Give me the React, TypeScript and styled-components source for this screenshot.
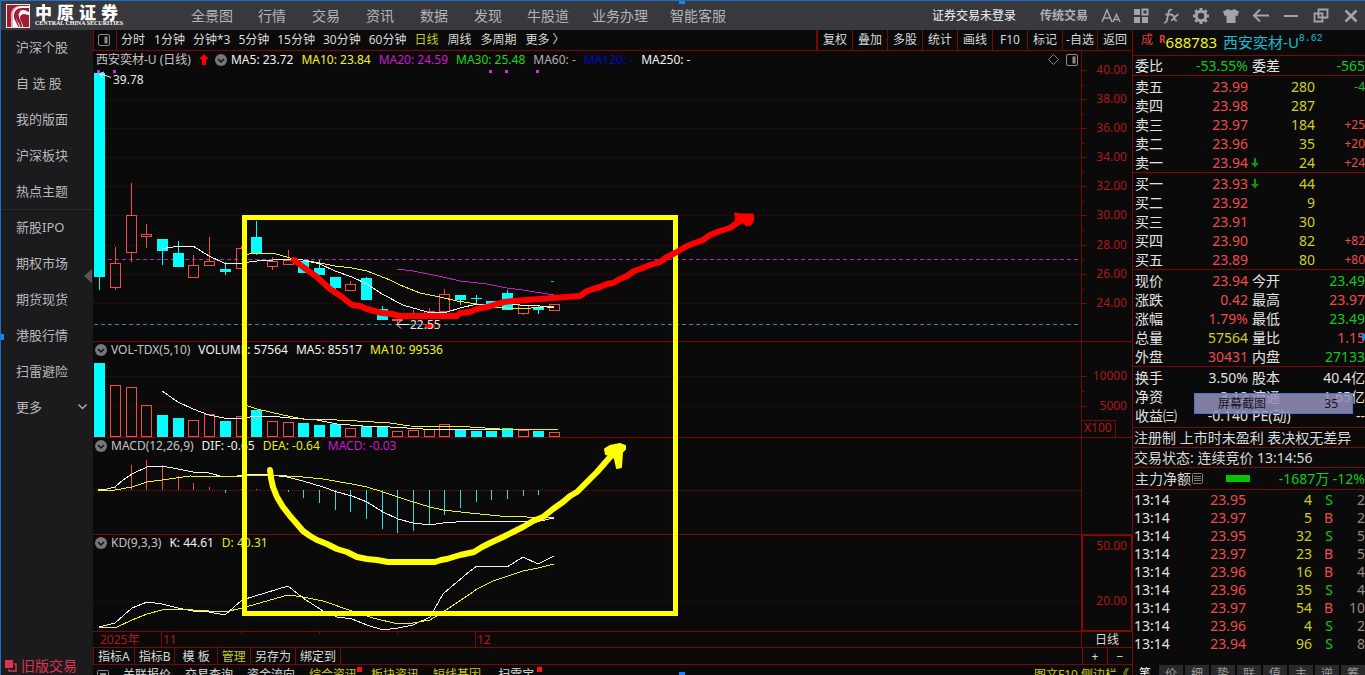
import React from "react";
import styled, { createGlobalStyle } from "styled-components";

const RED_LINE = "#7c0606";
const UP = "#f04a4a";
const DOWN = "#14c81e";
const QTY = "#cfcf22";
const CYAN = "#00ffff";

const GlobalStyle = createGlobalStyle`
  *, *::before, *::after { box-sizing: border-box; }
  html, body { margin: 0; background: #0a0a0a; }
  body { overflow: hidden; font-family: "Noto Sans", "Noto Sans CJK SC", sans-serif; font-size: 12px; color: #d8d8d8; }
  button { font: inherit; color: inherit; background: none; border: 0; padding: 0; margin: 0; white-space: nowrap; }
  a { color: inherit; text-decoration: none; }
  svg { display: block; flex: none; }
`;

const Frame = styled.div`
  position: relative;
  height: 100vh;
  overflow: hidden;
  display: flex;
  flex-direction: column;
  border-top: 1px solid #1f6fc4;
  border-left: 1px solid #1f6fc4;
`;

const Handle = styled.i<{ $side: "top" | "bottom" | "left" | "right" }>`
  position: absolute;
  z-index: 5;
  width: 6px;
  height: 6px;
  background: #1c84ee;
  ${(p) => (p.$side === "top" || p.$side === "bottom" ? "left: calc(50% - 4px);" : "top: 333px;")}
  ${(p) => `${p.$side}: -3px;`}
`;

/* ---------- title bar ---------- */

const TitleBar = styled.header`
  flex: none;
  height: 29px;
  display: flex;
  align-items: center;
  background: #38383d;
`;

const Brand = styled.a`
  width: 178px;
  display: flex;
  gap: 5px;
  padding-left: 5px;
  color: #fff;
`;

const BrandText = styled.span`
  display: flex;
  flex-direction: column;
`;

const BrandName = styled.span`
  display: flex;
  gap: 5px;
  font: 900 17px/16px "Noto Sans CJK SC", sans-serif;
`;

const BrandLatin = styled.span`
  font: bold 6px/6px "Liberation Serif", serif;
  white-space: nowrap;
`;

const Menu = styled.nav`
  flex: 1;
  display: flex;
`;

const MenuItem = styled.button<{ $pad: number }>`
  padding: 0 ${(p) => p.$pad}px;
  font-size: 14px;
  line-height: 28px;
  color: #b4b4b6;
`;

const Session = styled.div`
  display: flex;
  gap: 24px;
  margin-right: 13px;
  line-height: 28px;
`;

const SessionButton = styled.button<{ $dim?: boolean }>`
  color: ${(p) => (p.$dim ? "#b0b0b2" : "#f4f4f4")};
  font-weight: ${(p) => (p.$dim ? 700 : 400)};
`;

const WindowTools = styled.div`
  display: flex;
  gap: 10px;
  padding-right: 4px;
  color: #a4a4a8;
`;

const ToolButton = styled.button`
  width: 20px;
  height: 20px;
`;

/* ---------- page body ---------- */

const Body = styled.div`
  flex: 1;
  min-height: 0;
  display: flex;
`;

const Sidebar = styled.nav`
  position: relative;
  flex: none;
  width: 92px;
  display: flex;
  flex-direction: column;
  background: #1b1b1d;
`;

const SideItem = styled.button<{ $rule?: boolean }>`
  flex: none;
  display: flex;
  align-items: center;
  justify-content: space-between;
  height: 36px;
  padding: 0 6px 2px 15px;
  font-size: 13px;
  color: #b8b8ba;
  border-bottom: 1px solid ${(p) => (p.$rule ? "#2c2c2f" : "transparent")};
`;

const OldVersion = styled.button`
  display: flex;
  align-items: center;
  gap: 4px;
  margin-top: auto;
  padding-left: 4px;
  font-size: 14px;
  line-height: 19px;
  color: #dc3550;
`;

const Collapse = styled.button`
  position: absolute;
  right: 1px;
  top: 239px;
  width: 8px;
  height: 14px;
`;

const Main = styled.main`
  flex: 1;
  min-width: 0;
  display: flex;
  flex-direction: column;
`;

const Toolbar = styled.div`
  flex: none;
  display: flex;
  height: 21px;
  border-bottom: 1px solid ${RED_LINE};
  border-left: 1px solid ${RED_LINE};
`;

const LayoutCell = styled.button`
  width: 23px;
  padding-left: 4px;
  border-right: 1px solid ${RED_LINE};
`;

const Periods = styled.div`
  flex: 1;
  display: flex;
  gap: 8px;
  padding-left: 4px;
`;

const Period = styled.button<{ $active?: boolean; $word?: boolean }>`
  margin-right: ${(p) => (p.$word ? 1 : 0)}px;
  line-height: 20px;
  color: ${(p) => (p.$active ? "#c8c81c" : "#dadada")};
`;

const Actions = styled.div`
  display: flex;
  border-left: 1px solid ${RED_LINE};
`;

const Action = styled.button`
  width: 35px;
  line-height: 20px;
  border-left: 1px solid ${RED_LINE};
`;

/* ---------- charts ---------- */

const Charts = styled.div`
  position: relative;
  flex: none;
`;

const Panel = styled.section`
  display: flex;
  border-bottom: 1px solid ${RED_LINE};
`;

const PlotColumn = styled.div`
  flex: 1;
  min-width: 0;
  padding-left: 1px;
`;

const Value = styled.span<{ $color?: string }>`
  color: ${(p) => p.$color ?? "#f2f2f2"};
`;

const LegendName = styled.span`
  margin-right: 2px;
  color: #c4c4c4;
`;

const Legend = styled.div<{ $tall?: boolean }>`
  display: flex;
  align-items: center;
  gap: 6px;
  height: ${(p) => (p.$tall ? 17 : 16)}px;
  padding-left: ${(p) => (p.$tall ? 2 : 1)}px;
  line-height: 16px;
  white-space: pre;

  svg + ${LegendName}, svg + ${Value} { margin-left: -2px; }
  ${Value} + ${Value} { margin-left: 2px; }
`;

const LegendTools = styled.span`
  display: flex;
  align-items: center;
  gap: 7px;
  margin: 0 3px 0 auto;
`;

const Axis = styled.div<{ $framed?: boolean }>`
  flex: none;
  width: 51px;
  border-left: 1px solid ${RED_LINE};
  box-shadow: ${(p) => (p.$framed ? "inset 0 0 0 1px #8e0808" : "none")};
`;

const Annotations = styled.svg`
  position: absolute;
  left: 0;
  top: 0;
  pointer-events: none;
`;

const TabsRow = styled.div`
  flex: none;
  display: flex;
  height: 17px;
  border-bottom: 1px solid ${RED_LINE};
  border-left: 1px solid ${RED_LINE};
`;

const TemplateTab = styled.button<{ $active?: boolean }>`
  padding: 1px 4px 0;
  line-height: 15px;
  border-right: 1px solid ${RED_LINE};
  color: ${(p) => (p.$active ? "#c8c81c" : "#dadada")};
`;

const ZoomKeys = styled.div`
  display: flex;
  margin-left: auto;
`;

const ZoomKey = styled.button`
  width: 25px;
  line-height: 15px;
  border-left: 1px solid ${RED_LINE};
`;

const AxisCaption = styled.div`
  flex: none;
  width: 51px;
  border-left: 1px solid ${RED_LINE};
  text-align: center;
  line-height: 15px;
`;

const LinksRow = styled.div`
  flex: none;
  display: flex;
  gap: 14px;
  padding: 1px 3px 0 4px;
  line-height: 17px;
`;

const LinkItem = styled.a<{ $hot?: boolean; $end?: boolean }>`
  position: relative;
  white-space: pre;
  margin-left: ${(p) => (p.$end ? "auto" : 0)};
  color: ${(p) => (p.$hot ? "#c8c81c" : "#dadada")};
`;

const NewDot = styled.i`
  position: absolute;
  right: -5px;
  top: 1px;
  width: 5px;
  height: 5px;
  background: #ff1010;
`;

/* ---------- quote panel ---------- */

const Quote = styled.aside`
  position: relative;
  flex: none;
  width: 233px;
  display: flex;
  flex-direction: column;
  border-left: 1px solid ${RED_LINE};
`;

const QuoteHead = styled.h1`
  flex: none;
  display: flex;
  height: 26px;
  margin: 0;
  padding: 0 0 0 8px;
  font-size: 15px;
  font-weight: 400;
  line-height: 25px;
  border-bottom: 1px solid ${RED_LINE};
`;

const Flag = styled.span`
  width: 18px;
  font-size: 12px;
  line-height: 19px;
  color: #e03a3a;
`;

const Mark = styled.sup`
  font-size: 10px;
  font-weight: 700;
  line-height: 18px;
  color: #e03a3a;
`;

const Code = styled.span`
  margin-right: 6px;
  color: #f4f41c;
`;

const StockName = styled.span`
  color: #14bcd0;
`;

const Change = styled.sup`
  font: 10px/18px "Liberation Mono", monospace;
  color: #14bcd0;
`;

const Table = styled.table`
  width: 100%;
  table-layout: fixed;
  border-collapse: collapse;
`;

const TableBox = styled.div<{ $top?: number; $bottom?: number; $open?: boolean }>`
  flex: none;
  padding: ${(p) => p.$top ?? 1}px 0 ${(p) => p.$bottom ?? 0}px;
  border-bottom: 1px solid ${(p) => (p.$open ? "transparent" : RED_LINE)};
`;

const Cell = styled.td<{ $color?: string; $small?: boolean; $short?: boolean }>`
  height: ${(p) => (p.$short ? 18 : 19)}px;
  padding: 0;
  font-size: ${(p) => (p.$small ? 12 : 14)}px;
  line-height: 18px;
  white-space: nowrap;
  text-align: right;
  color: ${(p) => p.$color ?? "#e0e0e0"};
`;

const Label = styled.th<{ $second?: boolean; $short?: boolean }>`
  height: ${(p) => (p.$short ? 18 : 19)}px;
  padding: 0 0 0 ${(p) => (p.$second ? 4 : p.$short ? 1 : 2)}px;
  font-size: 14px;
  font-weight: 400;
  line-height: 18px;
  text-align: left;
  white-space: nowrap;
  color: #e4e4e4;
`;

const QtyBox = styled.div`
  display: flex;
  align-items: center;
  padding-left: 3px;
`;

const QtyNumber = styled.span`
  margin-left: auto;
`;

const Note = styled.p`
  flex: none;
  margin: 0;
  padding-left: 1px;
  font-size: 14px;
  line-height: 19px;
  white-space: nowrap;
  border-bottom: 1px solid ${RED_LINE};
`;

const Flow = styled.div`
  flex: none;
  display: flex;
  align-items: center;
  height: 22px;
  padding-left: 2px;
  font-size: 14px;
  line-height: 20px;
  white-space: pre;
  border-bottom: 1px solid ${RED_LINE};
`;

const FlowBar = styled.i`
  width: 24px;
  height: 7px;
  margin-left: 22px;
  background: #04c404;
`;

const FlowValue = styled.span`
  margin-left: auto;
  color: ${DOWN};
`;

const QuoteTabs = styled.div`
  flex: none;
  display: flex;
  gap: 2px;
  margin-top: 11px;
`;

const QuoteTab = styled.button<{ $active?: boolean }>`
  width: 24px;
  flex: none;
  line-height: 18px;
  background: ${(p) => (p.$active ? "#0a0a0a" : "#2a2a2d")};
  color: ${(p) => (p.$active ? "#fff" : "#9a9a9a")};
`;

const CaptureTag = styled.div`
  position: absolute;
  left: 61px;
  top: 363px;
  width: 159px;
  display: flex;
  justify-content: space-between;
  padding: 0 14px 0 23px;
  font-size: 12px;
  line-height: 19px;
  color: #15151c;
  background: rgba(150, 145, 190, 0.85);
  border: 1px solid #4a78c0;
`;

/* ---------- data ---------- */

type Candle = [x: number, top: number, bottom: number, high: number, low: number, up: 0 | 1, volTop: number];

const CANDLES: Candle[] = [
  [99, 73, 277, 73, 290, 0, 363],
  [115, 263, 288, 247, 290, 1, 385],
  [131, 215, 253, 183, 262, 1, 387],
  [146, 234, 237, 224, 248, 1, 405],
  [162, 239, 251, 239, 265, 0, 415],
  [178, 253, 267, 241, 267, 0, 418],
  [193, 265, 278, 255, 278, 1, 420],
  [209, 261, 266, 237, 266, 1, 414],
  [225, 269, 272, 262, 275, 0, 421],
  [241, 248, 269, 246, 269, 1, 416],
  [256, 237, 254, 221, 255, 0, 410],
  [272, 261, 267, 257, 270, 1, 421],
  [288, 260, 265, 250, 265, 1, 422],
  [303, 261, 273, 261, 273, 0, 423],
  [319, 268, 275, 260, 275, 0, 425],
  [335, 277, 288, 277, 289, 0, 424],
  [350, 284, 291, 281, 291, 1, 428],
  [366, 278, 300, 277, 300, 0, 426],
  [382, 309, 320, 306, 320, 0, 427],
  [397, 319, 321, 317, 323, 1, 431],
  [413, 315, 318, 310, 318, 1, 430],
  [429, 311, 315, 308, 315, 1, 429],
  [444, 294, 312, 289, 312, 1, 424],
  [460, 295, 300, 295, 305, 0, 430],
  [476, 298, 299, 295, 303, 0, 431],
  [491, 301, 304, 301, 304, 0, 431],
  [507, 293, 310, 290, 310, 0, 428],
  [523, 305, 314, 305, 315, 1, 430],
  [538, 307, 310, 306, 314, 0, 431],
  [554, 304, 311, 304, 311, 1, 432],
];

const MACD_ENDS = [
  490, 487, 465, 460, 465, 476, 483, 487, 493, 489, 489, 490, 492, 498, 503, 510, 512, 519, 529, 533, 531, 525, 515,
  508, 502, 500, 499, 496, 495, 490,
];

const MA5 =
  "162,249 178,246 193,246 209,256 224,263 242,263 257,261 273,260 290,259 303,260 320,264 335,271 352,277 367,284 382,294 403,305 427,312 435,313 447,312 460,308 477,304 490,304 503,303 520,305 540,306 554,308";
const MA10 =
  "242,255 257,253 273,253 290,258 303,260 320,263 335,266 352,268 367,271 390,280 400,285 420,293 440,297 457,301 477,304 493,307 520,309 554,306";
const MA20 = "397,269 413,271 443,277 460,281 487,284 507,288 523,290 554,295";
const VMA5 =
  "162,391 178,402 193,409 209,415 224,418 242,419 250,417 270,416 290,418 317,420 337,424 363,426 390,427 423,429 470,429 558,430";
const VMA10 = "242,404 257,409 283,415 303,419 337,420 357,421 390,423 410,426 470,427 500,429 558,430";
const DIF =
  "98,490 107,489 115,487 123,480 132,474 147,467 162,466 178,469 193,472 209,473 224,477 237,476 250,474 270,475 287,477 303,481 323,487 337,492 352,496 367,502 383,512 398,519 413,523 430,525 443,523 470,521 500,521 540,521 554,518";
const DEA =
  "98,490 115,490 132,487 147,482 162,480 190,476 237,477 250,475 270,475 303,477 323,479 352,484 367,487 383,492 410,501 430,507 443,510 470,513 500,516 527,517 554,518";
const K_LINE =
  "99,627 115,623 132,608 147,602 162,604 178,608 193,611 209,612 225,615 242,600 288,586 303,598 323,611 337,617 352,619 367,625 383,630 398,628 413,625 430,617 443,594 457,582 470,571 477,566 507,567 523,557 538,564 554,556";
const D_LINE =
  "99,627 117,627 132,620 147,614 162,610 178,609 193,610 225,612 242,608 288,595 303,597 323,601 352,611 373,618 398,624 413,623 430,620 443,612 470,594 477,589 493,581 523,571 538,568 554,564";

const MENU = ["全景图", "行情", "交易", "资讯", "数据", "发现", "牛股道", "业务办理", "智能客服"];
const SIDE = [
  "沪深个股", "自 选 股", "我的版面", "沪深板块", "热点主题", "新股IPO", "期权市场", "期货现货", "港股行情", "扫雷避险",
];
const PERIODS = ["分时", "1分钟", "分钟*3", "5分钟", "15分钟", "30分钟", "60分钟", "日线", "周线", "多周期", "更多 〉"];
const WORD_PERIODS = ["分时", "日线", "周线", "多周期"];
const ACTIONS = ["复权", "叠加", "多股", "统计", "画线", "F10", "标记", "-自选", "返回"];
const TEMPLATES = ["指标A", "指标B", " 模 板 ", "管理", "另存为", "绑定到"];
const QUOTE_TABS = ["笔", "价", "细", "势", "联", "值", "主", "逆", "筹"];

type Level = { name: string; price: string; qty: string; diff: string; arrow?: boolean };
const ASKS: Level[] = [
  { name: "卖五", price: "23.99", qty: "280", diff: "-4" },
  { name: "卖四", price: "23.98", qty: "287", diff: "" },
  { name: "卖三", price: "23.97", qty: "184", diff: "+25" },
  { name: "卖二", price: "23.96", qty: "35", diff: "+20" },
  { name: "卖一", price: "23.94", qty: "24", diff: "+24", arrow: true },
];
const BIDS: Level[] = [
  { name: "买一", price: "23.93", qty: "44", diff: "", arrow: true },
  { name: "买二", price: "23.92", qty: "9", diff: "" },
  { name: "买三", price: "23.91", qty: "30", diff: "" },
  { name: "买四", price: "23.90", qty: "82", diff: "+82" },
  { name: "买五", price: "23.89", qty: "80", diff: "+80" },
];

type Pair = [string, string, string | undefined, string, string, string | undefined];
const RATIO: Pair[] = [["委比", "-53.55%", DOWN, "委差", "-565", DOWN]];
const STATS: Pair[] = [
  ["现价", "23.94", UP, "今开", "23.49", DOWN],
  ["涨跌", "0.42", UP, "最高", "23.97", UP],
  ["涨幅", "1.79%", UP, "最低", "23.49", DOWN],
  ["总量", "57564", QTY, "量比", "1.15", UP],
  ["外盘", "30431", UP, "内盘", "27133", DOWN],
];
const FUNDAMENTALS: Pair[] = [
  ["换手", "3.50%", undefined, "股本", "40.4亿", undefined],
  ["净资", "3.12", undefined, "流通", "1.65亿", undefined],
  ["收益㈢", "-0.140", undefined, "PE(动)", "--", undefined],
];
const TRADES: [string, string, "S" | "B", string][] = [
  ["23.95", "4", "S", "2"],
  ["23.97", "5", "B", "2"],
  ["23.95", "32", "S", "5"],
  ["23.97", "23", "B", "5"],
  ["23.96", "16", "B", "4"],
  ["23.96", "35", "S", "4"],
  ["23.97", "54", "B", "10"],
  ["23.96", "4", "S", "2"],
  ["23.94", "96", "S", "8"],
];

/* ---------- drawing parts ---------- */

const Line = ({ points, color = "#f4f4f4" }: { points: string; color?: string }) => (
  <polyline points={points} fill="none" stroke={color} strokeWidth={1} shapeRendering="crispEdges" />
);

/* Chart coordinates count from the window corner; each plot shifts them to its own top. */
const Plot = ({ top, height, grid = [], children }: {
  top: number; height: number; grid?: number[]; children: React.ReactNode;
}) => (
  <svg width="100%" height={height}>
    {grid.map((y) => (
      <line key={y} x1="0" x2="100%" y1={y - top + 0.5} y2={y - top + 0.5} stroke="#6e0c0c" strokeDasharray="1 3" />
    ))}
    <g transform={`translate(-94 ${-top})`}>{children}</g>
  </svg>
);

const Bar = ({ x, top, bottom, up }: { x: number; top: number; bottom: number; up: 0 | 1 }) =>
  up ? (
    <rect x={x - 4.5} y={top + 0.5} width={10} height={Math.max(bottom - top - 1, 1)} fill="none" stroke={UP} />
  ) : (
    <rect x={x - 5} y={top} width={11} height={bottom - top} fill={CYAN} />
  );

const AxisScale = ({ top, height, marks, minor = [], box }: {
  top: number; height: number; marks: [number, string][]; minor?: number[]; box?: boolean;
}) => (
  <svg width="50" height={height} fontSize="12" fill="#b01818">
    {marks.map(([y, text]) => (
      <g key={text}>
        <path d={`M0 ${y - top + 0.5}h5`} stroke={RED_LINE} />
        <text x="45" y={y - top + 4} textAnchor="end">{text}</text>
      </g>
    ))}
    {minor.map((y) => (
      <path key={y} d={`M0 ${y - top + 0.5}h2`} stroke={RED_LINE} />
    ))}
    {box ? (
      <g>
        <path d={`M0 ${420.5 - top}h33.5v17`} stroke={RED_LINE} fill="none" />
        <text x="2" y={432 - top}>X100</text>
      </g>
    ) : null}
  </svg>
);

const RoundChevron = () => (
  <svg width="12" height="12" viewBox="0 0 12 12">
    <circle cx="6" cy="6" r="6" fill="#77777a" />
    <path d="M3 5l3 3 3-3" fill="none" stroke="#101010" strokeWidth="1.5" />
  </svg>
);

const PaneIcon = () => (
  <svg width="12" height="12" viewBox="0 0 12 12">
    <rect x=".5" y=".5" width="11" height="11" rx="1.5" fill="none" stroke="#8c8c8c" />
    <rect x="6.5" y="2.5" width="3" height="7" fill="#8c8c8c" />
  </svg>
);

const LogoMark = () => (
  <svg width="24" height="24" viewBox="0 0 24 24">
    <rect width="24" height="24" fill="#f2e9ea" />
    <rect x="1" y="1" width="22" height="22" fill="#a01c30" />
    <path d="M5 23V11C5 5 9 2 15 2h8v2h-7C11 4 8 7 8 12c0 5 3 6 4 11z" fill="#fff" />
    <path d="M13 23c0-4-3-6-3-10 0-4 3-7 7-7 3 0 5 2 6 2v3c-2 0-4-1-5-1-2 0-4 1-4 4 0 3 3 5 3 9z" fill="#fff" />
    <path d="M10 14c-1-5 2-7 6-8-3 2-4 4-3 7 1 4 3 5 3 10h-2c0-4-3-5-4-9z" fill="#a01c30" />
    <path d="M1 14c2-7 5-11 12-12-4 2-6 5-6 9v12H4z" fill="#a01c30" opacity=".35" />
  </svg>
);

const icon = { width: 20, height: 20, viewBox: "0 0 20 20", fill: "none", stroke: "currentColor", strokeWidth: 2 };

const TOOL_ICONS: [string, React.ReactNode][] = [
  ["字体", (
    <svg {...icon} strokeWidth={1.5}>
      <path d="M1 16L6 4l5 12M3 12h6M12 16l3.5-7.500L19 16M13 13.500h5" />
    </svg>
  )],
  ["布局", (
    <svg {...icon} stroke="none" fill="currentColor">
      <path d="M3 3h6v6H3zM3 11h6v6H3zM11 11h6v6h-6z" />
      <path d="M11.500 3.500h5v5h-5z" fill="none" stroke="currentColor" />
    </svg>
  )],
  ["公式", (
    <svg {...icon} strokeWidth={1.8}>
      <path d="M11 4c-2-1-3 0-3.500 2.500L6 14c-.5 2.500-1.500 3-3 2.500M4.500 8.500h6M10 8.500c2 0 2.500 1 3 3s1 3.500 3 3M17.500 8.500c-2.500 0-5.500 6-7.500 6" />
    </svg>
  )],
  ["设置", (
    <svg {...icon}>
      <circle cx="10" cy="10" r="4.700" strokeWidth="3" />
      <path d="M10 2v3M10 15v3M2 10h3M15 10h3M4.300 4.300l2.200 2.200M13.500 13.500l2.200 2.200M4.300 15.700l2.200-2.200M13.500 6.500l2.200-2.200" strokeWidth="3" />
    </svg>
  )],
  ["皮肤", (
    <svg {...icon} stroke="none" fill="currentColor">
      <path d="M7 3c1 1.500 5 1.500 6 0l5 2.500-1.500 4.500-2-.5V17h-9V9.500l-2 .5L2 5.500z" />
    </svg>
  )],
  ["后退", <svg {...icon}><path d="M18 9.500H3.500M9 3.500l-6 6 6 6" /></svg>],
  ["最小化", <svg {...icon}><path d="M3 10h14" /></svg>],
  ["还原", (
    <svg {...icon} strokeWidth={1.8}>
      <path d="M3.500 7.500h8v8h-8zM7.500 3.500h9v8h-9zM7.500 7.500v4h4" />
    </svg>
  )],
  ["关闭", <svg {...icon} strokeWidth={2.5}><path d="M4.500 4.500l11 11M15.500 4.500l-11 11" /></svg>],
];

/* ---------- table parts ---------- */

const LevelTable = ({ rows }: { rows: Level[] }) => (
  <TableBox>
    <Table>
      <colgroup><col width="60" /><col width="55" /><col width="67" /><col width="50" /></colgroup>
      <tbody>
        {rows.map((r) => (
          <tr key={r.name}>
            <Label scope="row">{r.name}</Label>
            <Cell $color={UP}>{r.price}</Cell>
            <Cell $color={QTY}>
              <QtyBox>
                {r.arrow ? (
                  <svg width="8" height="10" viewBox="0 0 8 10">
                    <path d="M3 0h2v5h3L4 9.500 0 5h3z" fill="#0c940c" />
                  </svg>
                ) : null}
                <QtyNumber>{r.qty}</QtyNumber>
              </QtyBox>
            </Cell>
            <Cell $small $color={r.diff.startsWith("-") ? DOWN : UP}>{r.diff}</Cell>
          </tr>
        ))}
      </tbody>
    </Table>
  </TableBox>
);

const PairTable = ({ rows, top, bottom }: { rows: Pair[]; top?: number; bottom?: number }) => (
  <TableBox $top={top} $bottom={bottom}>
    <Table>
      <colgroup><col width="50" /><col width="65" /><col width="50" /><col width="67" /></colgroup>
      <tbody>
        {rows.map(([a, v, c, b, w, d]) => (
          <tr key={a}>
            <Label scope="row">{a}</Label>
            <Cell $color={c}>{v}</Cell>
            <Label scope="row" $second>{b}</Label>
            <Cell $color={d}>{w}</Cell>
          </tr>
        ))}
      </tbody>
    </Table>
  </TableBox>
);

/* ---------- page ---------- */

export default function App() {
  return (
    <Frame>
      <GlobalStyle />
      <Handle $side="top" />
      <Handle $side="bottom" />
      <Handle $side="left" />
      <Handle $side="right" />

      <TitleBar>
        <Brand href="#">
          <LogoMark />
          <BrandText>
            <BrandName>{[..."中原证券"].map((ch) => <span key={ch}>{ch}</span>)}</BrandName>
            <BrandLatin>CENTRAL CHINA SECURITIES</BrandLatin>
          </BrandText>
        </Brand>
        <Menu>
          {MENU.map((m) => <MenuItem key={m} $pad={15 - m.length}>{m}</MenuItem>)}
        </Menu>
        <Session>
          <SessionButton>证券交易未登录</SessionButton>
          <SessionButton $dim>传统交易</SessionButton>
        </Session>
        <WindowTools>
          {TOOL_ICONS.map(([name, drawing]) => <ToolButton key={name} aria-label={name}>{drawing}</ToolButton>)}
        </WindowTools>
      </TitleBar>

      <Body>
        <Sidebar>
          {SIDE.map((s) => <SideItem key={s} $rule={s === "热点主题"}>{s}</SideItem>)}
          <SideItem>
            更多
            <svg width="9" height="6" viewBox="0 0 9 6"><path d="M.5 .5l4 4 4-4" fill="none" stroke="#b0b0b0" strokeWidth="1.3" /></svg>
          </SideItem>
          <OldVersion>
            <svg width="12" height="12" viewBox="0 0 12 12">
              <rect x="0" y="0" width="8" height="8" fill="#dc3550" />
              <path d="M9 4h2v7H4V9" fill="none" stroke="#dc3550" strokeWidth="1.5" />
            </svg>
            旧版交易
          </OldVersion>
          <Collapse aria-label="收起">
            <svg width="8" height="14" viewBox="0 0 8 14"><path d="M8 0v14L0 7z" fill="#56565a" /></svg>
          </Collapse>
        </Sidebar>

        <Main>
          <Toolbar>
            <LayoutCell aria-label="版面"><PaneIcon /></LayoutCell>
            <Periods>
              {PERIODS.map((p) => (
                <Period key={p} $active={p === "日线"} $word={WORD_PERIODS.includes(p)}>{p}</Period>
              ))}
            </Periods>
            <Actions>{ACTIONS.map((a) => <Action key={a}>{a}</Action>)}</Actions>
          </Toolbar>

          <Charts>
            <Panel>
              <PlotColumn>
                <Legend $tall>
                  <LegendName>西安奕材-U (日线)</LegendName>
                  <svg width="10" height="11" viewBox="0 0 10 11"><path d="M5 0l5 5H7v6H3V5H0z" fill="#f00" /></svg>
                  <RoundChevron />
                  <Value>MA5: 23.72</Value>
                  <Value $color="#f4f41c">MA10: 23.84</Value>
                  <Value $color="#d018d0">MA20: 24.59</Value>
                  <Value $color="#14dc14">MA30: 25.48</Value>
                  <Value $color="#b0b0b0">MA60: -</Value>
                  <Value $color="#0808c4">MA120: -</Value>
                  <Value>MA250: -</Value>
                  <LegendTools>
                    <svg width="11" height="11" viewBox="0 0 11 11">
                      <path d="M5.500 .5l5 5-5 5-5-5z" fill="none" stroke="#808080" />
                    </svg>
                    <PaneIcon />
                  </LegendTools>
                </Legend>
                <Plot top={68} height={273} grid={[99, 128, 157, 186, 215, 245, 274, 303]}>
                  <path d="M94 259.500H4000" stroke="#b424b4" strokeDasharray="4 3" />
                  <path d="M94 324.500H4000" stroke="#3c84b4" strokeDasharray="4 3" />
                  {CANDLES.map(([x, top, bottom, high, low, up]) => (
                    <g key={x}>
                      <path
                        d={up ? `M${x + 0.5} ${high}V${top}M${x + 0.5} ${bottom}V${low}` : `M${x + 0.5} ${high}V${low}`}
                        stroke={up ? UP : CYAN}
                      />
                      <Bar x={x} top={top} bottom={bottom} up={up} />
                    </g>
                  ))}
                  <Line points={MA20} color="#c81cc8" />
                  <Line points={MA10} color="#f0f01c" />
                  <Line points={MA5} />
                  <path d="M551 281.500h3" stroke="#14dc14" />
                  {[98, 114, 490, 506, 537].map((x) => (
                    <rect key={x} x={x - 1} y="70" width="3" height="3" fill="#d828d8" />
                  ))}
                  <path d="M111 77.500l-11-4M104 72l-4 1.500 2 4" fill="none" stroke="#f0f0f0" />
                  <path d="M409 324.500h-12M401 320.500l-4 4 4 4" fill="none" stroke="#f0f0f0" />
                  <text x="113" y="84" fontSize="12" fill="#e4e4e4">39.78</text>
                  <ellipse cx="430" cy="326" rx="5" ry="3" fill="#f00" />
                  <text x="410" y="329" fontSize="12" fill="#e4e4e4">22.55</text>
                </Plot>
              </PlotColumn>
              <Axis>
                <AxisScale
                  top={51}
                  height={290}
                  marks={[
                    [70, "40.00"], [99, "38.00"], [128, "36.00"], [157, "34.00"], [186, "32.00"],
                    [215, "30.00"], [245, "28.00"], [274, "26.00"], [303, "24.00"],
                  ]}
                  minor={[85, 114, 143, 172, 201, 230, 260, 289]}
                />
              </Axis>
            </Panel>

            <Panel>
              <PlotColumn>
                <Legend>
                  <RoundChevron />
                  <LegendName>VOL-TDX(5,10)</LegendName>
                  <Value>VOLUME: 57564</Value>
                  <Value>MA5: 85517</Value>
                  <Value $color="#f4f41c">MA10: 99536</Value>
                </Legend>
                <Plot top={358} height={79} grid={[376, 406]}>
                  {CANDLES.map(([x, , , , , up, vol]) => <Bar key={x} x={x} top={vol} bottom={437} up={up} />)}
                  <Line points={VMA5} />
                  <Line points={VMA10} color="#f0f01c" />
                </Plot>
              </PlotColumn>
              <Axis>
                <AxisScale top={342} height={95} marks={[[376, "10000"], [406, "5000"]]} minor={[391]} box />
              </Axis>
            </Panel>

            <Panel>
              <PlotColumn>
                <Legend>
                  <RoundChevron />
                  <LegendName>MACD(12,26,9)</LegendName>
                  <Value>DIF: -0.65</Value>
                  <Value $color="#e8e81c">DEA: -0.64</Value>
                  <Value $color="#d018d0">MACD: -0.03</Value>
                </Legend>
                <Plot top={454} height={80}>
                  <path d="M94 490.500H4000" stroke="#7c1010" strokeDasharray="1 1" />
                  {MACD_ENDS.map((y, i) => (
                    <path
                      key={CANDLES[i][0]}
                      d={`M${CANDLES[i][0] + 0.5} 490V${y}`}
                      stroke={y < 490 ? UP : "#3cd8d8"}
                    />
                  ))}
                  <Line points={DIF} />
                  <Line points={DEA} color="#f0f01c" />
                </Plot>
              </PlotColumn>
              <Axis />
            </Panel>

            <Panel>
              <PlotColumn>
                <Legend>
                  <RoundChevron />
                  <LegendName>KD(9,3,3)</LegendName>
                  <Value>K: 44.61</Value>
                  <Value $color="#e8e81c">D: 40.31</Value>
                </Legend>
                <Plot top={551} height={80} grid={[601]}>
                  <Line points={K_LINE} />
                  <Line points={D_LINE} color="#f0f01c" />
                </Plot>
              </PlotColumn>
              <Axis $framed>
                <svg width="50" height="96" fontSize="12" fill="#b01818">
                  <text x="45" y="15" textAnchor="end">50.00</text>
                  <text x="45" y="70" textAnchor="end">20.00</text>
                </svg>
              </Axis>
            </Panel>

            <Panel>
              <PlotColumn>
                <svg width="100%" height="15" fontSize="12" fill="#b01818">
                  <text x="6" y="12">2025年</text>
                  <text x="69" y="12">11</text>
                  <text x="383" y="12">12</text>
                  <path d="M67.500 0v15M381.500 0v15M147.500 0v2M225.500 0v2M303.500 0v2" stroke={RED_LINE} />
                </svg>
              </PlotColumn>
              <AxisCaption>日线</AxisCaption>
            </Panel>

            <Annotations width="680" height="600">
              <g transform="translate(-93 -51)" strokeLinejoin="round" strokeLinecap="round" fill="none">
                <rect x="244.500" y="217.500" width="431" height="396" stroke="#ff0" strokeWidth="5" strokeLinejoin="miter" />
                <polyline
                  points="294,260 303,267 317,277 330,289 342,297 352,305 360,306 367,309 382,313 392,314 400,316 457,316 460,313 470,312 477,309 487,307 497,304 504,302 513,301 540,299 580,296 587,291 593,289 600,287 607,284 613,283 620,279 627,276 634,271 640,269 650,265 660,262 667,257 675,253 687,246 695,243 703,240 710,235 720,231 730,228 737,223 747,218"
                  stroke="#f00"
                  strokeWidth="6"
                />
                <path d="M735 213l5 1 13 0 1 6-3 5-5 1-3-4-7 0z" fill="#f00" stroke="#f00" strokeWidth="1" />
                <polyline
                  points="270,470 271,478 273,487 277,497 283,507 290,516 297,524 303,531 310,536 317,540 327,544 337,549 347,552 357,557 367,559 377,560 388,562 435,562 441,560 447,559 460,555 474,552 482,547 490,543 503,537 513,532 523,527 533,521 543,517 553,509 563,502 570,496 577,492 587,482 597,472 604,464 611,456"
                  stroke="#ff0"
                  strokeWidth="6"
                />
                <path
                  d="M605 449l5-3 10-2 5 2 0 3-3 3-1 15-4 1-2-9-2-3-7-2z"
                  fill="#ff0"
                  stroke="#ff0"
                  strokeWidth="2"
                />
              </g>
            </Annotations>
          </Charts>

          <TabsRow>
            {TEMPLATES.map((t) => (
              <TemplateTab key={t} $active={t === "管理"}>{t.startsWith(" ") ? <>&nbsp;{t.trim()}&nbsp;</> : t}</TemplateTab>
            ))}
            <ZoomKeys>
              <ZoomKey>+</ZoomKey>
              <ZoomKey>−</ZoomKey>
            </ZoomKeys>
          </TabsRow>

          <LinksRow>
            <LinkItem href="#" aria-label="面板">
              <svg width="12" height="16" viewBox="0 -4 12 16">
                <rect x=".5" y=".5" width="11" height="11" rx="1" fill="none" stroke="#8c8c8c" />
                <rect x="3" y="3" width="6" height="6" fill="#8c8c8c" />
              </svg>
            </LinkItem>
            <LinkItem href="#">关联报价</LinkItem>
            <LinkItem href="#">交易查询</LinkItem>
            <LinkItem href="#">资金流向</LinkItem>
            <LinkItem href="#" $hot>综合资讯<NewDot /></LinkItem>
            <LinkItem href="#" $hot>板块资讯</LinkItem>
            <LinkItem href="#" $hot>短线基因</LinkItem>
            <LinkItem href="#"> 扫雷宝 <NewDot /></LinkItem>
            <LinkItem href="#" $hot $end>图文F10 侧边栏《</LinkItem>
          </LinksRow>
        </Main>

        <Quote>
          <QuoteHead>
            <Flag>成</Flag>
            <Mark>R</Mark>
            <Code>688783</Code>
            <StockName>西安奕材-U</StockName>
            <Change>8.62</Change>
          </QuoteHead>
          <PairTable rows={RATIO} top={0} />
          <LevelTable rows={ASKS} />
          <LevelTable rows={BIDS} />
          <PairTable rows={STATS} />
          <PairTable rows={FUNDAMENTALS} bottom={2} />
          <Note>注册制 上市时未盈利 表决权无差异</Note>
          <Note>交易状态: 连续竞价 13:14:56</Note>
          <Flow>
            主力净额
            <svg width="13" height="13" viewBox="0 0 13 13">
              <rect x="1.500" y="1.500" width="10" height="10" rx="1" fill="none" stroke="#808080" />
              <path d="M3 4.500h7M3 6.500h7M3 8.500h7" stroke="#808080" />
            </svg>
            <FlowBar />
            <FlowValue>-1687万 -12%</FlowValue>
          </Flow>
          <TableBox $open>
            <Table>
              <colgroup><col width="50" /><col width="63" /><col width="66" /><col width="21" /><col width="32" /></colgroup>
              <tbody>
                {TRADES.map(([price, qty, side, count], i) => (
                  <tr key={i}>
                    <Label scope="row" $short>13:14</Label>
                    <Cell $short $color={UP}>{price}</Cell>
                    <Cell $short $color={QTY}>{qty}</Cell>
                    <Cell $short $color={side === "S" ? DOWN : UP}>{side}</Cell>
                    <Cell $short $color="#8c8c8c">{count}</Cell>
                  </tr>
                ))}
              </tbody>
            </Table>
          </TableBox>
          <QuoteTabs>
            {QUOTE_TABS.map((t, i) => <QuoteTab key={t} $active={i === 0}>{t}</QuoteTab>)}
          </QuoteTabs>
          <CaptureTag><span>屏幕截图</span><span>35</span></CaptureTag>
        </Quote>
      </Body>
    </Frame>
  );
}
